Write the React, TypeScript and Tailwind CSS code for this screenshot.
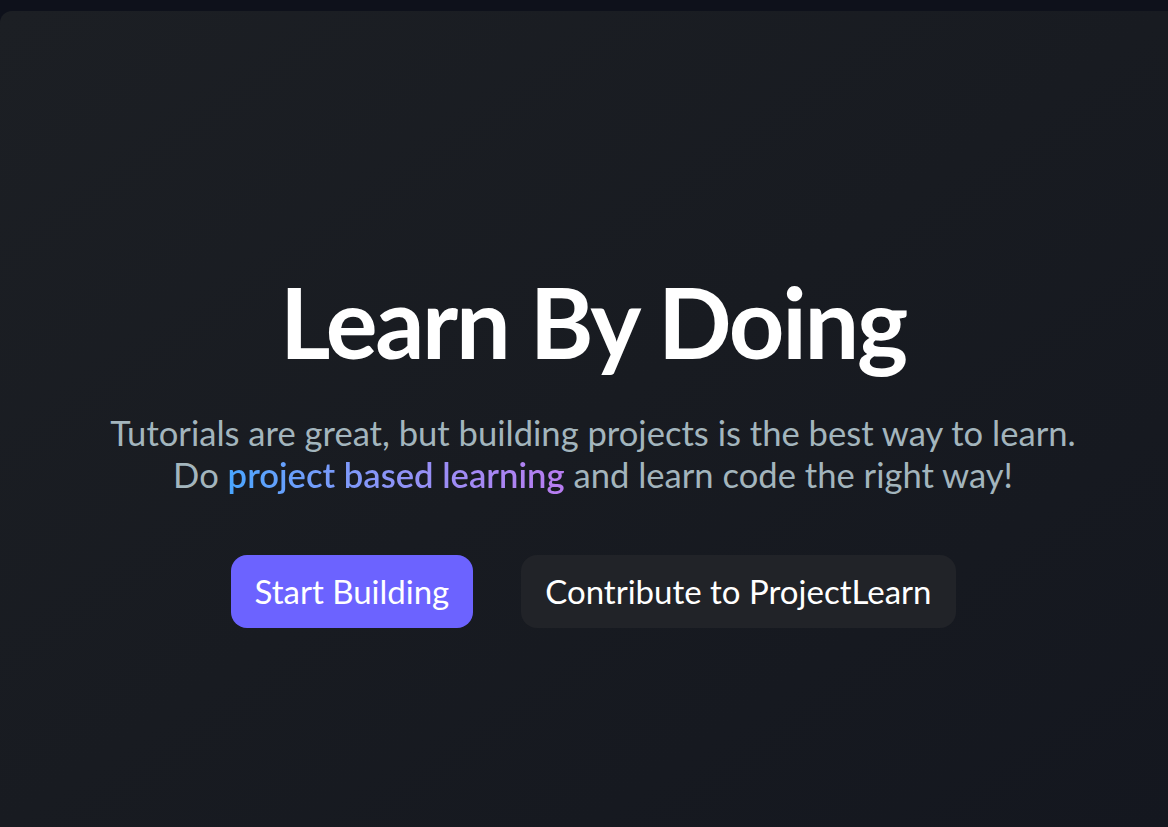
export default function App() {
  return (
    <div className="min-h-screen bg-[#0e111b] pt-[11px] font-['Lato',sans-serif]">
      <section className="h-[816px] rounded-tl-xl bg-gradient-to-br from-[#1c1f24] via-[#181b21] to-[#14171f] flex flex-col items-center pt-[262px] pl-[18px]">
        <h1 className="text-[97px] leading-none font-bold text-white tracking-[-2.3px]">Learn By Doing</h1>
        <p className="mt-[42px] text-[34.6px] leading-[42px] text-[#a3b5bd] text-center">
          Tutorials are great, but building projects is the best way to learn.
          <br />
          Do{" "}
          <span className="font-semibold bg-gradient-to-r from-[#48a6ff] to-[#b87cf0] bg-clip-text text-transparent">
            project based learning
          </span>{" "}
          and learn code the right way!
        </p>
        <div className="mt-[59px] flex gap-12">
          <button className="h-[73px] px-6 rounded-2xl bg-[#6c63ff] text-white text-[33px]">Start Building</button>
          <button className="h-[73px] px-6 rounded-2xl bg-[#212328] text-white text-[33px]">Contribute to ProjectLearn</button>
        </div>
      </section>
    </div>
  );
}
